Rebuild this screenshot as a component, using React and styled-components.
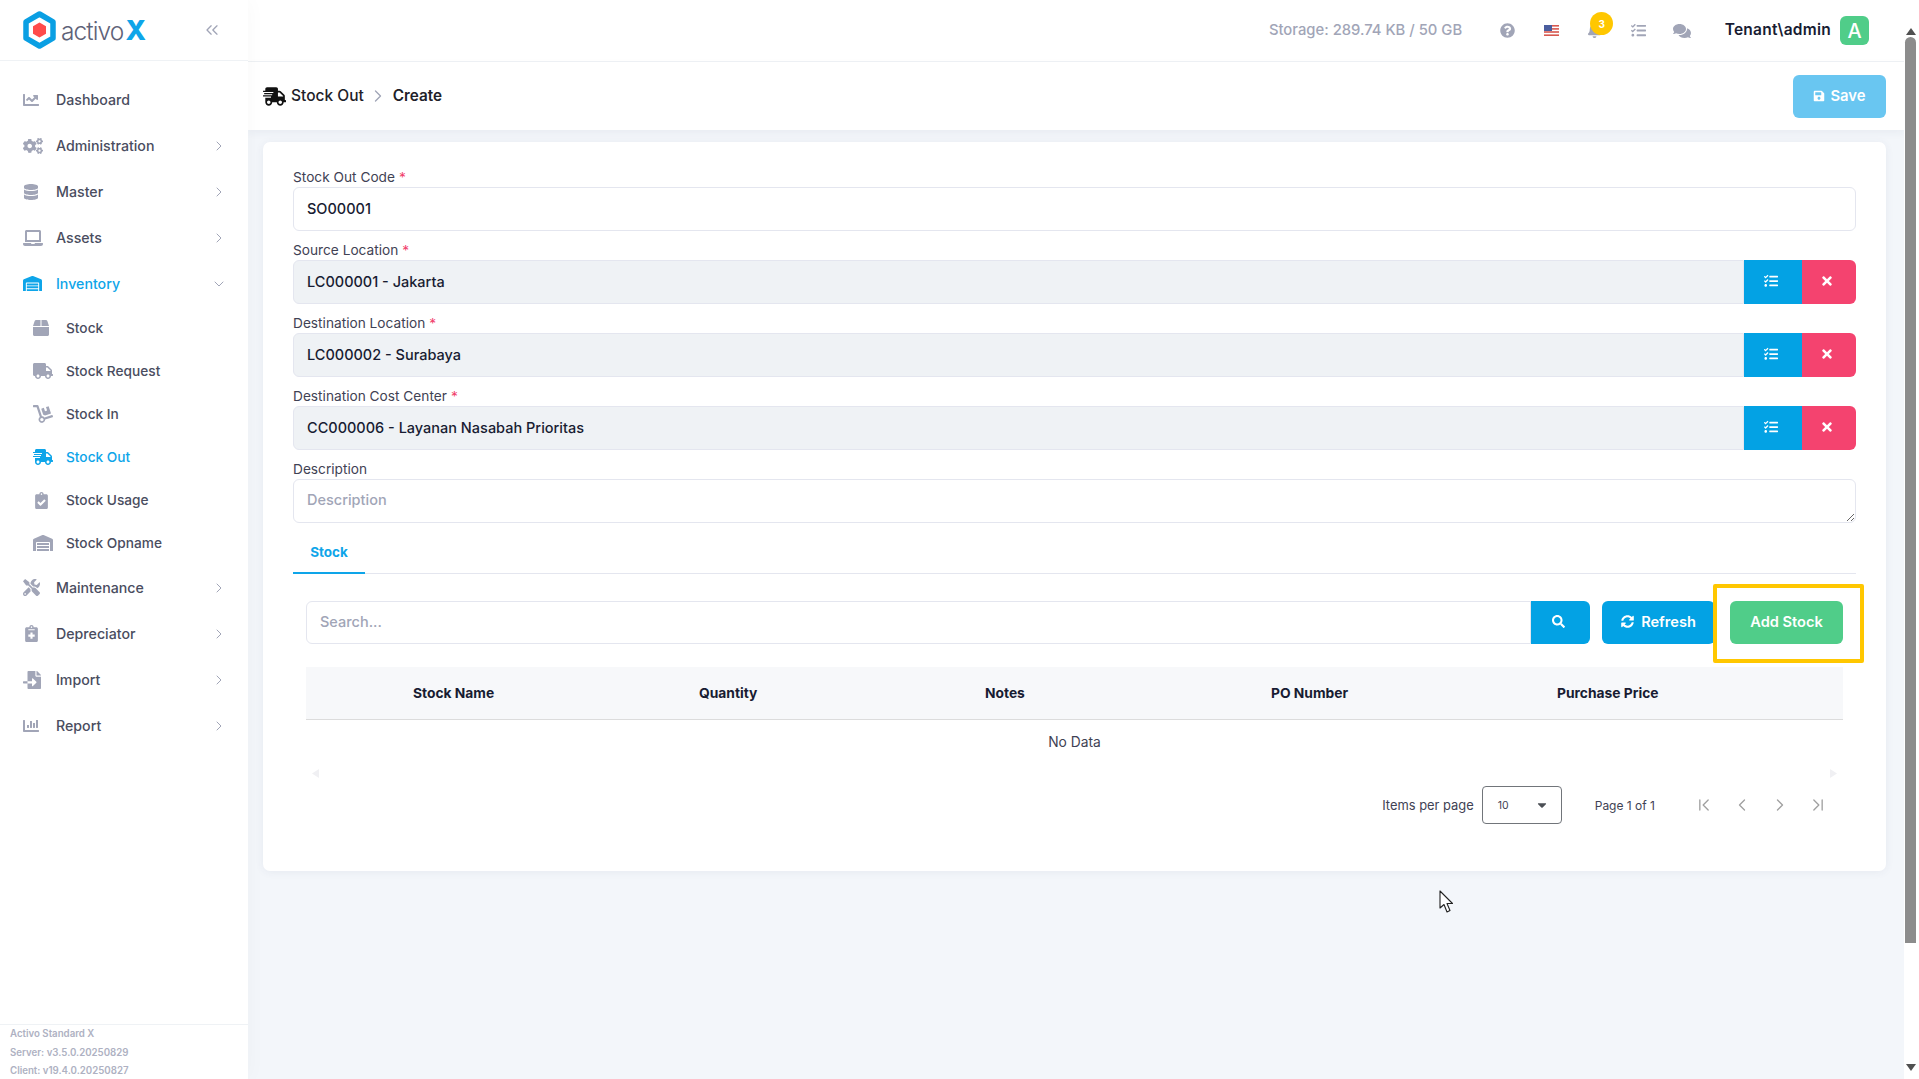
import React from "react";
import styled, { createGlobalStyle } from "styled-components";
import {
  FaChartLine, FaCogs, FaDatabase, FaLaptop, FaWarehouse, FaBox, FaTruck, FaDolly,
  FaShippingFast, FaClipboardCheck, FaTools, FaNotesMedical, FaFileImport, FaChartBar,
  FaQuestionCircle, FaBell, FaTasks, FaComments, FaSave, FaSyncAlt, FaSearch, FaTimes, FaCaretDown,
} from "react-icons/fa";
import { ChevronRight, ChevronDown, ChevronsLeft, ChevronLeft, ChevronFirst, ChevronLast } from "lucide-react";

const GlobalStyle = createGlobalStyle`
html, body { margin:0; height:100%; overflow:hidden; background:#fff; }
* { box-sizing:border-box; }
body { font-family:Inter, "Open Sans", sans-serif; color:#181c32; }
`;

const Page = styled.div`
display:flex;
height:1079px;
position:relative;
`;

const Sidebar = styled.aside`
width:248px;
flex:none;
display:flex;
flex-direction:column;
background:#fff;
box-shadow:0 0 20px rgba(0,0,0,.03);
z-index:2;
`;

const Brand = styled.div`
height:61px;
flex:none;
display:flex;
align-items:center;
padding:0 26px 0 23px;
border-bottom:1px solid #eff2f5;
color:#a1a5b7;
`;

const BrandName = styled.div`
margin-left:5px;
font-size:24.5px;
font-weight:300;
color:#5e6278;
letter-spacing:-.9px;
flex:1;
& b { font-weight:800; color:#0ea5e9; font-size:27px; margin-left:2px; letter-spacing:0; }
`;

const Nav = styled.nav`
padding-top:15.5px;
`;

const NavRow = styled.div`
display:flex;
align-items:center;
height:${(p) => (p.$sub ? "43px" : "46px")};
padding-left:${(p) => (p.$sub ? "33px" : "23px")};
padding-right:21px;
font-size:${(p) => (p.$sub ? "13.7px" : "14.2px")};
font-weight:500;
color:${(p) => (p.$active ? "#0ea5e9" : "#4a4d60")};
& > svg { color:#a1a5b7; }
`;

const NavIcon = styled.span`
width:33px;
flex:none;
display:flex;
align-items:center;
color:inherit;
`;

const NavLabel = styled.span`
flex:1;
`;

const SideFooter = styled.div`
margin-top:auto;
height:55px;
border-top:1px solid #eff2f5;
padding-left:10px;
font-size:9.7px;
font-weight:600;
line-height:18.5px;
color:#aeb1c2;
`;

const Main = styled.main`
flex:1;
min-width:0;
display:flex;
flex-direction:column;
background:#f3f6fa;
`;

const TopBar = styled.header`
height:62px;
flex:none;
background:#fff;
border-bottom:1px solid #eff2f5;
display:flex;
align-items:center;
justify-content:flex-end;
padding-right:35px;
`;

const Storage = styled.span`
font-size:14.8px;
font-weight:500;
color:#a1a5b7;
margin-right:24px;
padding-bottom:2px;
`;

const TopIcon = styled.span`
width:43.5px;
display:flex;
justify-content:center;
color:#a1a5b7;
font-size:15px;
position:relative;
`;

const Badge = styled.span`
position:absolute;
top:-11px;
left:17px;
width:23px;
height:23px;
border-radius:50%;
background:#ffc700;
color:#fff;
font-size:10px;
font-weight:700;
display:flex;
align-items:center;
justify-content:center;
`;

const UserName = styled.span`
margin-left:21px;
font-size:15.5px;
font-weight:600;
color:#181c32;
padding-bottom:2px;
letter-spacing:.25px;
`;

const Avatar = styled.span`
margin-left:9px;
width:29px;
height:29px;
border-radius:6px;
background:#50cd89;
color:#fff;
font-size:20px;
font-weight:500;
display:flex;
align-items:center;
justify-content:center;
`;

const SubHeader = styled.div`
height:68px;
flex:none;
background:#fff;
display:flex;
align-items:center;
padding:0 18px 0 15px;
box-shadow:0 3px 8px rgba(40,50,90,.05);
`;

const Crumb = styled.span`
font-size:${(p) => (p.$current ? "15.3px" : "15.5px")};
font-weight:${(p) => (p.$current ? 600 : 500)};
color:#1e2129;
display:flex;
align-items:center;
gap:5px;
padding-bottom:2px;
& svg { font-size:23px; color:#111; margin-top:2px; }
`;

const CrumbSep = styled.span`
display:flex;
margin:0 5px 0 4px;
color:#a1a5b7;
`;

const SaveButton = styled.button`
margin-left:auto;
width:93px;
height:43px;
border:none;
border-radius:6px;
background:#69c6f1;
color:#fff;
font:600 14.8px Inter, sans-serif;
display:flex;
align-items:center;
justify-content:center;
gap:5px;
`;

const Content = styled.div`
flex:1;
padding:12px 18px 0 15px;
`;

const Card = styled.section`
height:729px;
background:#fff;
border-radius:7px;
box-shadow:0 1px 8px rgba(60,70,110,.07);
padding:25px 30px 0;
`;

const Form = styled.div`
display:flex;
flex-direction:column;
gap:9px;
`;

const FieldLabel = styled.label`
display:block;
height:20px;
line-height:20px;
font-size:13.7px;
color:#3f4254;
& i { font-style:normal; color:#f1416c; margin-left:4px; }
`;

const InputGroup = styled.div`
display:flex;
height:44px;
`;

const TextInput = styled.input`
flex:1;
min-width:0;
height:44px;
padding:0 13px 2px;
border:1px solid #e4e6ef;
border-radius:${(p) => (p.$attached ? "6px 0 0 6px" : "6px")};
background:${(p) => (p.$locked ? "#eff2f5" : "#fff")};
font:500 14.5px Inter, sans-serif;
color:#181c32;
outline:none;
&::placeholder { color:#a1a5b7; }
`;

const TextArea = styled.textarea`
display:block;
width:100%;
height:44px;
padding:11px 13px;
border:1px solid #e4e6ef;
border-radius:6px;
font:500 14.5px Inter, sans-serif;
outline:none;
&::placeholder { color:#a1a5b7; }
`;

const SquareButton = styled.button`
width:${(p) => (p.$danger ? "54px" : "58px")};
flex:none;
border:none;
border-radius:${(p) => (p.$danger ? "0 6px 6px 0" : "0")};
background:${(p) => (p.$danger ? "#f4436f" : "#03a2e4")};
color:#fff;
font-size:14px;
display:flex;
align-items:center;
justify-content:center;
padding:0 5px 2px 0;
`;

const Tabs = styled.div`
margin-top:10px;
height:41px;
border-bottom:1px solid #e4e6ef;
display:flex;
`;

const Tab = styled.div`
width:72px;
height:41px;
display:flex;
align-items:center;
justify-content:center;
padding-bottom:1px;
font-size:13.5px;
font-weight:700;
color:#0ea5e9;
border-bottom:2px solid #0ea5e9;
`;

const Panel = styled.div`
padding:27px 13px 0;
`;

const SearchRow = styled.div`
display:flex;
height:43px;
`;

const SearchInput = styled(TextInput)`
height:43px;
`;

const SearchButton = styled.button`
width:59px;
flex:none;
border:none;
border-radius:0 6px 6px 0;
background:#03a2e4;
color:#fff;
font-size:13px;
display:flex;
align-items:center;
justify-content:center;
padding:0 5px 2px 0;
`;

const ActionButton = styled.button`
width:${(p) => p.$w}px;
margin-left:${(p) => p.$gap}px;
flex:none;
border:none;
border-radius:6px;
background:${(p) => p.$bg};
color:#fff;
font:600 14.6px Inter, sans-serif;
display:flex;
align-items:center;
justify-content:center;
gap:7px;
padding:0 0 2px;
`;

const TableHead = styled.div`
margin-top:23px;
height:53px;
background:#f7f8fa;
border-bottom:1px solid #dcdcdc;
display:grid;
grid-template-columns:repeat(5, 286px);
padding-left:107px;
align-items:center;
font-size:13.8px;
font-weight:700;
color:#181c32;
`;

const EmptyRow = styled.div`
height:45px;
display:flex;
align-items:center;
justify-content:center;
padding-bottom:2px;
font-size:13.8px;
color:#3f4254;
`;

const ScrollHints = styled.div`
height:16px;
display:flex;
align-items:center;
justify-content:space-between;
padding:0 6px;
color:#f0f0f3;
`;

const Paginator = styled.div`
margin-top:5px;
display:flex;
align-items:center;
justify-content:flex-end;
padding-right:6px;
height:38px;
font-size:12.9px;
color:#3f4254;
`;

const PerPage = styled.div`
width:80px;
height:38px;
margin:0 33px 0 8px;
padding:0 12px 0 15px;
border:1px solid #71757a;
border-radius:4px;
display:flex;
align-items:center;
justify-content:space-between;
font-size:10.5px;
color:#3f4254;
& svg { font-size:14px; color:#4b4f55; }
`;

const PageText = styled.span`
margin-right:30px;
font-size:12px;
`;

const PageButton = styled.span`
width:38px;
display:flex;
justify-content:center;
color:#a0a0a0;
`;

const Highlight = styled.div`
position:absolute;
left:1713px;
top:584px;
width:151px;
height:79px;
border:4px solid #ffc700;
border-radius:2px;
pointer-events:none;
`;

const Cursor = styled.svg`
position:absolute;
left:1439px;
top:890px;
`;

const ScrollTrack = styled.div`
width:15px;
flex:none;
background:#fff;
display:flex;
flex-direction:column;
align-items:center;
padding:0 3px 0 1px;
`;

const Arrow = styled.span`
width:0;
height:0;
margin:${(p) => (p.$down ? "0 0 8px" : "28px 0 0")};
border-left:5.5px solid transparent;
border-right:5.5px solid transparent;
${(p) => (p.$down ? "border-top:7px solid #505050;" : "border-bottom:7px solid #505050;")}
`;

const Thumb = styled.span`
width:11px;
height:906px;
margin-top:2px;
margin-bottom:auto;
border-radius:6px 6px 0 0;
background:#8c8c8c;
`;

const Logo = () => (
  <svg width="33" height="38" viewBox="0 0 33 38">
    <polygon points="16.5,3 30,10.8 30,27.2 16.5,35 3,27.2 3,10.8" fill="#fff" stroke="#0a9fe3" strokeWidth="5.5" strokeLinejoin="round" />
    <polygon points="16.5,11.5 23,15.2 23,22.8 16.5,26.5 10,22.8 10,15.2" fill="#ff4b4b" />
  </svg>
);

const UsFlag = () => (
  <svg width="15" height="11" viewBox="0 0 15 11">
    <rect width="15" height="11" fill="#fff" />
    <rect width="15" height="1.6" fill="#d8584f" />
    <rect y="3.1" width="15" height="1.6" fill="#d8584f" />
    <rect y="6.2" width="15" height="1.6" fill="#d8584f" />
    <rect y="9.4" width="15" height="1.6" fill="#d8584f" />
    <rect width="8" height="6" fill="#4a5d9e" />
  </svg>
);

const HintLeft = () => (
  <svg width="7" height="9" viewBox="0 0 7 9"><polygon points="7,0 7,9 0,4.5" fill="currentColor" /></svg>
);

const HintRight = () => (
  <svg width="7" height="9" viewBox="0 0 7 9"><polygon points="0,0 0,9 7,4.5" fill="currentColor" /></svg>
);

const navItems = [
  { label: "Dashboard", icon: FaChartLine, size: 16 },
  { label: "Administration", icon: FaCogs, size: 20, more: true },
  { label: "Master", icon: FaDatabase, size: 16, more: true },
  { label: "Assets", icon: FaLaptop, size: 20, more: true },
  { label: "Inventory", icon: FaWarehouse, size: 19, open: true, active: true },
  { label: "Stock", icon: FaBox, size: 16, sub: true },
  { label: "Stock Request", icon: FaTruck, size: 20, sub: true },
  { label: "Stock In", icon: FaDolly, size: 20, sub: true },
  { label: "Stock Out", icon: FaShippingFast, size: 20, sub: true, active: true },
  { label: "Stock Usage", icon: FaClipboardCheck, size: 17, sub: true },
  { label: "Stock Opname", icon: FaWarehouse, size: 20, sub: true },
  { label: "Maintenance", icon: FaTools, size: 17, more: true },
  { label: "Depreciator", icon: FaNotesMedical, size: 17, more: true },
  { label: "Import", icon: FaFileImport, size: 18, more: true },
  { label: "Report", icon: FaChartBar, size: 16, more: true },
];

const lookups = [
  { label: "Source Location", value: "LC000001 - Jakarta" },
  { label: "Destination Location", value: "LC000002 - Surabaya" },
  { label: "Destination Cost Center", value: "CC000006 - Layanan Nasabah Prioritas" },
];

const columns = ["Stock Name", "Quantity", "Notes", "PO Number", "Purchase Price"];

export default function App() {
  return (
    <Page>
      <GlobalStyle />
      <Sidebar>
        <Brand>
          <Logo />
          <BrandName>activo<b>X</b></BrandName>
          <ChevronsLeft size={20} strokeWidth={1.6} />
        </Brand>
        <Nav>
          {navItems.map((item) => (
            <NavRow key={item.label} $sub={item.sub} $active={item.active}>
              <NavIcon><item.icon size={item.size} color={item.active ? "#0ea5e9" : "#a1a5b7"} /></NavIcon>
              <NavLabel>{item.label}</NavLabel>
              {item.more && <ChevronRight size={16} strokeWidth={1.5} />}
              {item.open && <ChevronDown size={16} strokeWidth={1.5} />}
            </NavRow>
          ))}
        </Nav>
        <SideFooter>
          <div>Activo Standard X</div>
          <div>Server: v3.5.0.20250829</div>
          <div>Client: v19.4.0.20250827</div>
        </SideFooter>
      </Sidebar>

      <Main>
        <TopBar>
          <Storage>Storage: 289.74 KB / 50 GB</Storage>
          <TopIcon><FaQuestionCircle /></TopIcon>
          <TopIcon><UsFlag /></TopIcon>
          <TopIcon><FaBell /><Badge>3</Badge></TopIcon>
          <TopIcon><FaTasks /></TopIcon>
          <TopIcon><FaComments size={18} /></TopIcon>
          <UserName>Tenant\admin</UserName>
          <Avatar>A</Avatar>
        </TopBar>

        <SubHeader>
          <Crumb><FaShippingFast />Stock Out</Crumb>
          <CrumbSep><ChevronRight size={20} strokeWidth={1.6} /></CrumbSep>
          <Crumb $current>Create</Crumb>
          <SaveButton><FaSave size={12} />Save</SaveButton>
        </SubHeader>

        <Content>
          <Card>
            <Form>
              <div>
                <FieldLabel>Stock Out Code<i>*</i></FieldLabel>
                <InputGroup><TextInput defaultValue="SO00001" /></InputGroup>
              </div>
              {lookups.map((f) => (
                <div key={f.label}>
                  <FieldLabel>{f.label}<i>*</i></FieldLabel>
                  <InputGroup>
                    <TextInput $locked $attached readOnly value={f.value} />
                    <SquareButton><FaTasks /></SquareButton>
                    <SquareButton $danger><FaTimes /></SquareButton>
                  </InputGroup>
                </div>
              ))}
              <div>
                <FieldLabel>Description</FieldLabel>
                <TextArea placeholder="Description" />
              </div>
            </Form>

            <Tabs><Tab>Stock</Tab></Tabs>

            <Panel>
              <SearchRow>
                <SearchInput $attached placeholder="Search..." />
                <SearchButton><FaSearch /></SearchButton>
                <ActionButton $w={113} $gap={12} $bg="#03a2e4"><FaSyncAlt size={13} />Refresh</ActionButton>
                <ActionButton $w={113} $gap={15} $bg="#50cd89">Add Stock</ActionButton>
              </SearchRow>

              <TableHead>
                {columns.map((c) => <span key={c}>{c}</span>)}
              </TableHead>
              <EmptyRow>No Data</EmptyRow>
              <ScrollHints>
                <HintLeft />
                <HintRight />
              </ScrollHints>

              <Paginator>
                <span>Items per page</span>
                <PerPage>10<FaCaretDown /></PerPage>
                <PageText>Page 1 of 1</PageText>
                <PageButton><ChevronFirst size={20} strokeWidth={1.6} /></PageButton>
                <PageButton><ChevronLeft size={20} strokeWidth={1.6} /></PageButton>
                <PageButton><ChevronRight size={20} strokeWidth={1.6} /></PageButton>
                <PageButton><ChevronLast size={20} strokeWidth={1.6} /></PageButton>
              </Paginator>
            </Panel>
          </Card>
        </Content>
      </Main>

      <ScrollTrack>
        <Arrow />
        <Thumb />
        <Arrow $down />
      </ScrollTrack>

      <Highlight />
      <Cursor width="15" height="24" viewBox="0 0 15 24">
        <path d="M1 1 L1 18 L5 14.5 L8 22 L11 20.5 L8 13.5 L13.5 13.5 Z" fill="#fff" stroke="#222" strokeWidth="1.1" strokeLinejoin="round" />
      </Cursor>
    </Page>
  );
}
